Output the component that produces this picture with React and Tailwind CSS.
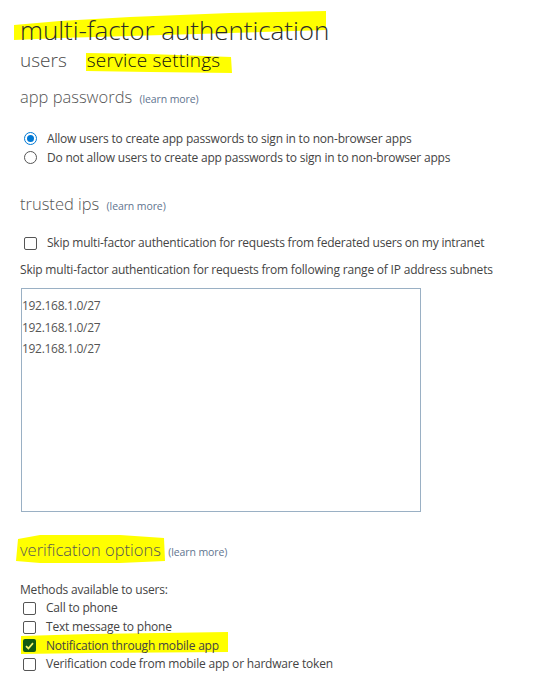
import React from "react";

const font = { fontFamily: '"Open Sans", "Noto Sans", "Liberation Sans", sans-serif' };

function RadioBlue() {
  return (
    <span className="inline-flex w-[13px] h-[13px] shrink-0 items-center justify-center rounded-full border border-[#0078d4] bg-white">
      <span className="w-[7px] h-[7px] rounded-full bg-[#0078d4]" />
    </span>
  );
}

function Radio() {
  return <span className="inline-block w-[13px] h-[13px] shrink-0 rounded-full border border-[#555] bg-white" />;
}

function Box({ checked }) {
  if (checked) {
    return (
      <span className="inline-flex w-[13px] h-[13px] shrink-0 items-center justify-center rounded-[2px] bg-[#125a12]">
        <svg width="9" height="8" viewBox="0 0 9 8">
          <path d="M1 4.2 L3.4 6.5 L8 1.2" fill="none" stroke="#f4f46a" strokeWidth="1.8" />
        </svg>
      </span>
    );
  }
  return <span className="inline-block w-[13px] h-[13px] shrink-0 rounded-[2px] border border-[#555] bg-white" />;
}

function Learn() {
  return <span className="text-[10.5px] text-[#5f7590] ml-[3px] font-normal tracking-[-0.1px]">(learn more)</span>;
}

export default function App() {
  return (
    <div className="relative w-[541px] h-[681px] bg-white overflow-hidden" style={font}>
      <svg className="absolute inset-0 z-0" width="541" height="681">
        <polygon points="14,25 60,21 130,17 230,13 326,11 326,30 230,33 130,36 60,38 14,40" fill="#ffff00" />
        <polygon points="86,53 150,54 231,57 232,73 150,72 86,71" fill="#ffff00" />
        <polygon points="18,539 40,535 120,535 164,538 165,561 120,563 40,563 16,561" fill="#ffff00" />
        <polygon points="21,636 90,634 228,632 228,652 90,653 21,654" fill="#ffff00" />
      </svg>
      <div className="relative z-10 pl-[20px]">
        <div className="mt-[12px] h-[36px] leading-[36px] text-[26px] font-light text-[#2b2b2b] whitespace-nowrap tracking-[-0.05px]">
          multi-factor authentication
        </div>
        <div className="h-[24px] leading-[24px] text-[19px] font-light flex gap-[20px] whitespace-nowrap">
          <span className="text-[#4a4a4a]">users</span>
          <span className="text-[#111] tracking-[0.2px]">service settings</span>
        </div>

        <div className="mt-[13px] h-[24px] leading-[24px] text-[16.5px] font-light text-[#555] whitespace-nowrap">
          app passwords <Learn />
        </div>

        <div className="mt-[20px] text-[12px] text-[#444] tracking-[-0.2px]">
          <div className="h-[19px] flex items-center gap-[10px] pl-[4px] whitespace-nowrap">
            <RadioBlue />
            <span>Allow users to create app passwords to sign in to non-browser apps</span>
          </div>
          <div className="h-[19px] flex items-center gap-[10px] pl-[4px] whitespace-nowrap">
            <Radio />
            <span>Do not allow users to create app passwords to sign in to non-browser apps</span>
          </div>
        </div>

        <div className="mt-[25px] h-[24px] leading-[24px] text-[16.5px] font-light text-[#555] whitespace-nowrap">
          trusted ips <Learn />
        </div>

        <div className="mt-[17px] h-[20px] flex items-center gap-[10px] pl-[4px] text-[12px] text-[#444] whitespace-nowrap tracking-[-0.22px]">
          <Box />
          <span>Skip multi-factor authentication for requests from federated users on my intranet</span>
        </div>

        <div className="mt-[7px] h-[20px] leading-[20px] text-[12px] text-[#444] whitespace-nowrap tracking-[-0.2px]">
          Skip multi-factor authentication for requests from following range of IP address subnets
        </div>

        <div className="mt-[8px] ml-[1px] w-[400px] h-[224px] border border-[#9ab0c4] pt-[6px] text-[12px] leading-[21.5px] text-[#555] tracking-[-0.3px]">
          <div>192.168.1.0/27</div>
          <div>192.168.1.0/27</div>
          <div>192.168.1.0/27</div>
        </div>

        <div className="mt-[26px] h-[24px] leading-[24px] text-[16.5px] font-light text-[#555] whitespace-nowrap">
          verification options <Learn />
        </div>

        <div className="mt-[18px] h-[19px] leading-[19px] text-[12px] text-[#444] whitespace-nowrap tracking-[-0.2px]">
          Methods available to users:
        </div>
        <div className="text-[12px] text-[#444] tracking-[-0.2px]">
          {[
            ["Call to phone", false],
            ["Text message to phone", false],
            ["Notification through mobile app", true],
            ["Verification code from mobile app or hardware token", false],
          ].map(([t, c]) => (
            <div key={t} className="h-[18.7px] flex items-center gap-[10px] pl-[3px] whitespace-nowrap">
              <Box checked={c} />
              <span>{t}</span>
            </div>
          ))}
        </div>
      </div>
    </div>
  );
}
